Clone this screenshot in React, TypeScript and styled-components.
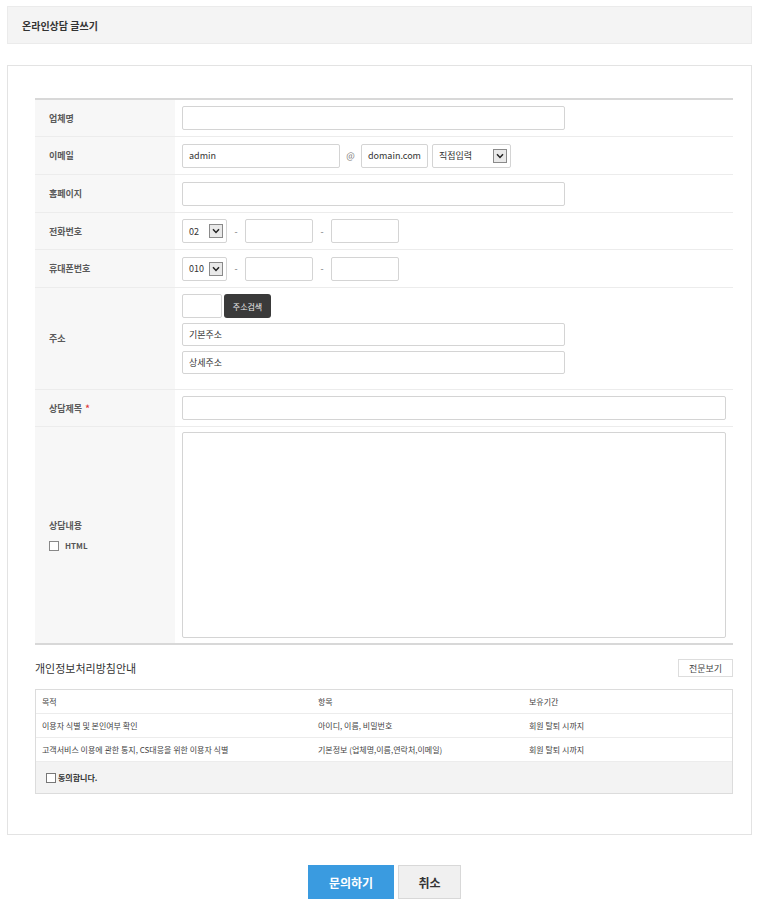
import React from 'react';
import styled, { createGlobalStyle } from 'styled-components';

const GlobalStyle = createGlobalStyle`
  body {
    margin: 0;
    background: #fff;
    font-family: "Noto Sans CJK KR", "Noto Sans", sans-serif;
    color: #333;
  }
`;

const Page = styled.div`
  width: 760px;
  padding: 6px 8px 0 7px;
  box-sizing: border-box;
`;

const TitleBar = styled.div`
  height: 38px;
  background: #f4f4f4;
  border: 1px solid #ebebeb;
  box-sizing: border-box;
  display: flex;
  align-items: center;
  padding-left: 14px;
  font-size: 10px;
  font-weight: 700;
  color: #333;
`;

const Panel = styled.div`
  margin-top: 21px;
  border: 1px solid #e3e3e3;
  padding: 32px 18px 40px 27px;
`;

const FormTable = styled.div`
  border-top: 2px solid #d8d8d8;
  border-bottom: 2px solid #d8d8d8;
`;

const Row = styled.div<{ $h: number }>`
  display: grid;
  grid-template-columns: 140px 1fr;
  height: ${(p) => p.$h}px;
  box-sizing: border-box;
  border-bottom: 1px solid #ececec;
  &:last-child {
    border-bottom: none;
  }
`;

const Label = styled.div`
  background: #f7f7f7;
  display: flex;
  flex-direction: column;
  justify-content: center;
  padding-left: 14px;
  font-size: 9px;
  font-weight: 700;
  color: #5a5a5a;
  gap: 8px;
`;

const Req = styled.span`
  color: #e03a3a;
  margin-left: 3px;
`;

const Cell = styled.div`
  display: flex;
  align-items: center;
  padding: 0 7px;
  gap: 4px;
  font-size: 9px;
  color: #666;
`;

const CellStack = styled.div`
  display: flex;
  flex-direction: column;
  padding: 6px 7px 0;
  gap: 5px;
`;

const Input = styled.div<{ $w: number | string; $h?: number }>`
  width: ${(p) => (typeof p.$w === 'number' ? `${p.$w}px` : p.$w)};
  height: ${(p) => p.$h ?? 24}px;
  box-sizing: border-box;
  border: 1px solid #d4d4d4;
  border-radius: 2px;
  background: #fff;
  display: flex;
  align-items: center;
  padding-left: 6px;
  font-size: 9px;
  color: #333;
`;

const Sep = styled.span<{ $w: number }>`
  width: ${(p) => p.$w}px;
  text-align: center;
  font-size: 9px;
  color: #777;
`;

const SelectBox = styled.div<{ $w: number }>`
  width: ${(p) => p.$w}px;
  height: 24px;
  box-sizing: border-box;
  border: 1px solid #d4d4d4;
  border-radius: 2px;
  display: flex;
  align-items: center;
  justify-content: space-between;
  padding: 0 3px 0 6px;
  font-size: 9px;
  color: #333;
`;

const Arrow = styled.span`
  width: 14px;
  height: 14px;
  box-sizing: border-box;
  border: 1px solid #8a8a8a;
  background: #e9e9e9;
  display: flex;
  align-items: center;
  justify-content: center;
`;

const Line = styled.div`
  display: flex;
  align-items: center;
  gap: 2px;
`;

const DarkBtn = styled.div`
  width: 47px;
  height: 24px;
  background: #3a3a3a;
  border-radius: 3px;
  color: #eee;
  font-size: 8px;
  display: flex;
  align-items: center;
  justify-content: center;
`;

const Check = styled.span`
  display: inline-block;
  width: 8px;
  height: 8px;
  border: 1px solid #888;
  background: #fff;
  margin-right: 6px;
`;

const CheckLabel = styled.div`
  display: flex;
  align-items: center;
  font-size: 8px;
  font-weight: 700;
  color: #555;
`;

const TextArea = styled.div`
  width: 544px;
  height: 206px;
  box-sizing: border-box;
  border: 1px solid #d4d4d4;
  border-radius: 2px;
`;

const PrivacyHead = styled.div`
  display: flex;
  justify-content: space-between;
  align-items: center;
  margin-top: 14px;
  margin-bottom: 12px;
`;

const PrivacyTitle = styled.div`
  font-size: 11px;
  color: #333;
`;

const WhiteBtn = styled.div`
  width: 55px;
  height: 18px;
  box-sizing: border-box;
  border: 1px solid #ddd;
  font-size: 9px;
  color: #444;
  display: flex;
  align-items: center;
  justify-content: center;
`;

const PTable = styled.div`
  border: 1px solid #dcdcdc;
`;

const PRow = styled.div`
  display: grid;
  grid-template-columns: 276px 211px 1fr;
  height: 23px;
  align-items: center;
  border-bottom: 1px solid #ececec;
  padding-left: 6px;
  font-size: 8px;
  color: #444;
`;

const AgreeRow = styled.div`
  height: 31px;
  background: #f3f3f3;
  display: flex;
  align-items: center;
  padding-left: 10px;
  font-size: 8px;
  font-weight: 700;
  color: #333;
`;

const AgreeCheck = styled.span`
  display: inline-block;
  width: 8px;
  height: 8px;
  border: 1px solid #777;
  background: #fff;
  margin-right: 2px;
`;

const Buttons = styled.div`
  display: flex;
  justify-content: center;
  gap: 4px;
  margin-top: 30px;
  padding-left: 10px;
`;

const Btn = styled.div<{ $primary?: boolean; $w: number }>`
  width: ${(p) => p.$w}px;
  height: 34px;
  box-sizing: border-box;
  background: ${(p) => (p.$primary ? '#3a9be0' : '#f0f0f0')};
  border: 1px solid ${(p) => (p.$primary ? '#3a9be0' : '#d8d8d8')};
  color: ${(p) => (p.$primary ? '#fff' : '#333')};
  font-size: 12px;
  font-weight: 700;
  display: flex;
  align-items: center;
  justify-content: center;
`;

function Select({ w, value }: { w: number; value: string }) {
  return (
    <SelectBox $w={w}>
      <span>{value}</span>
      <Arrow>
        <svg width="8" height="6" viewBox="0 0 8 6">
          <path d="M1 1.2 L4 4.4 L7 1.2" fill="none" stroke="#222" strokeWidth="1.5" />
        </svg>
      </Arrow>
    </SelectBox>
  );
}

function Phone({ code }: { code: string }) {
  return (
    <Cell>
      <Select w={45} value={code} />
      <Sep $w={10}>-</Sep>
      <Input $w={68} />
      <Sep $w={10}>-</Sep>
      <Input $w={68} />
    </Cell>
  );
}

export default function App() {
  return (
    <>
      <GlobalStyle />
      <Page>
        <TitleBar>온라인상담 글쓰기</TitleBar>
        <Panel>
          <FormTable>
            <Row $h={37}>
              <Label>업체명</Label>
              <Cell>
                <Input $w={383} />
              </Cell>
            </Row>
            <Row $h={38}>
              <Label>이메일</Label>
              <Cell>
                <Input $w={158}>admin</Input>
                <Sep $w={13}>@</Sep>
                <Input $w={67}>domain.com</Input>
                <Select w={79} value="직접입력" />
              </Cell>
            </Row>
            <Row $h={38}>
              <Label>홈페이지</Label>
              <Cell>
                <Input $w={383} />
              </Cell>
            </Row>
            <Row $h={37}>
              <Label>전화번호</Label>
              <Phone code="02" />
            </Row>
            <Row $h={38}>
              <Label>휴대폰번호</Label>
              <Phone code="010" />
            </Row>
            <Row $h={102}>
              <Label>주소</Label>
              <CellStack>
                <Line>
                  <Input $w={40} />
                  <DarkBtn>주소검색</DarkBtn>
                </Line>
                <Input $w={383} $h={23}>기본주소</Input>
                <Input $w={383} $h={23}>상세주소</Input>
              </CellStack>
            </Row>
            <Row $h={37}>
              <Label>
                <span>
                  상담제목<Req>*</Req>
                </span>
              </Label>
              <Cell>
                <Input $w={544} />
              </Cell>
            </Row>
            <Row $h={216}>
              <Label>
                <span>상담내용</span>
                <CheckLabel>
                  <Check />
                  HTML
                </CheckLabel>
              </Label>
              <Cell>
                <TextArea />
              </Cell>
            </Row>
          </FormTable>

          <PrivacyHead>
            <PrivacyTitle>개인정보처리방침안내</PrivacyTitle>
            <WhiteBtn>전문보기</WhiteBtn>
          </PrivacyHead>
          <PTable>
            <PRow>
              <span>목적</span>
              <span>항목</span>
              <span>보유기간</span>
            </PRow>
            <PRow>
              <span>이용자 식별 및 본인여부 확인</span>
              <span>아이디, 이름, 비밀번호</span>
              <span>회원 탈퇴 시까지</span>
            </PRow>
            <PRow>
              <span>고객서비스 이용에 관한 통지, CS대응을 위한 이용자 식별</span>
              <span>기본정보 (업체명,이름,연락처,이메일)</span>
              <span>회원 탈퇴 시까지</span>
            </PRow>
            <AgreeRow>
              <AgreeCheck />
              동의합니다.
            </AgreeRow>
          </PTable>
        </Panel>
        <Buttons>
          <Btn $primary $w={86}>문의하기</Btn>
          <Btn $w={63}>취소</Btn>
        </Buttons>
      </Page>
    </>
  );
}
